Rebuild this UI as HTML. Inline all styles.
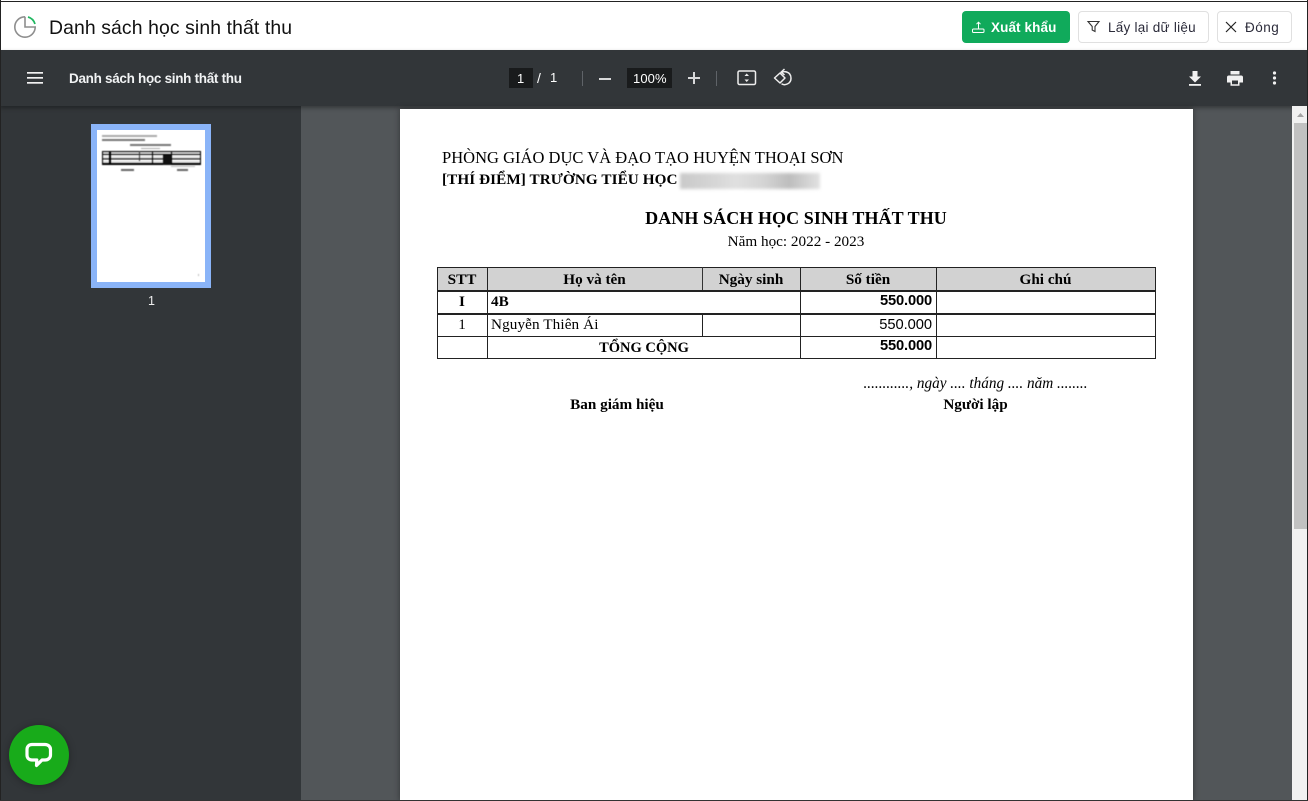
<!DOCTYPE html>
<html lang="vi"><head><meta charset="utf-8"><title>Danh sách học sinh thất thu</title>
<style>
*{box-sizing:border-box}
html,body{margin:0;padding:0;width:1308px;height:801px;overflow:hidden;background:#525659}
body{position:relative;font-family:"Liberation Sans",sans-serif}
.a{position:absolute;white-space:nowrap;line-height:1}
.r{position:absolute}
.t{font-family:"Liberation Serif",serif;color:#000}
.b{font-weight:bold}
.c{transform:translateX(-50%)}
.btn{position:absolute;top:11px;height:32px;border:1px solid #e0e0e0;border-radius:4px;background:#fff}
.w{color:#fff}
</style></head><body>
<!-- header -->
<div class="r" style="left:0;top:0;width:1308px;height:50px;background:#fff"></div>
<svg class="r" style="left:12px;top:14px" width="26" height="26" viewBox="0 0 26 26" fill="none">
<path d="M13 2.800A10.200 10.200 0 1 0 23.200 13H13V2.800" stroke="#8e8e8e" stroke-width="1.600"/>
<path d="M16 3A10.200 10.200 0 0 1 23 10" stroke="#20b760" stroke-width="1.700"/>
</svg>
<div class="a" style="left:49px;top:18.500px;font-size:19.400px;letter-spacing:.1px;color:#111">Danh sách học sinh thất thu</div>
<div class="btn" style="left:962px;width:108px;background:#10aa5b;border:0"></div>
<svg class="r" style="left:971px;top:20px" width="15" height="15" viewBox="0 0 15 15" fill="none" stroke="#fff" stroke-width="1"><path d="M7.500 2.200V9M5.500 4.200 7.500 2.200 9.500 4.200"/><rect x="1.500" y="9" width="11.500" height="3.500" rx="1"/></svg>
<div class="a b w" style="left:991px;top:21px;font-size:13.500px;letter-spacing:.1px">Xuất khẩu</div>
<div class="btn" style="left:1078px;width:131px"></div>
<svg class="r" style="left:1086px;top:19px" width="15" height="15" viewBox="0 0 15 15" fill="none" stroke="#333" stroke-width="1.100"><path d="M2 2.500H13L9 7.500V12.500L6.200 11V7.500Z"/></svg>
<div class="a" style="left:1108px;top:21px;font-size:13.500px;letter-spacing:.25px;color:#2b2b3a">Lấy lại dữ liệu</div>
<div class="btn" style="left:1217px;width:75px"></div>
<svg class="r" style="left:1224px;top:20px" width="14" height="14" viewBox="0 0 14 14" fill="none" stroke="#222" stroke-width="1.200"><path d="M2 2 12 12M12 2 2 12"/></svg>
<div class="a" style="left:1245px;top:21px;font-size:13.500px;letter-spacing:.5px;color:#2b2b3a">Đóng</div>

<!-- pdf toolbar -->
<div class="r" style="left:0;top:106px;width:301px;height:695px;background:#323639"></div>
<div class="r" style="left:0;top:50px;width:1308px;height:56px;background:#323639;box-shadow:0 2px 4px rgba(0,0,0,.35)"></div>
<svg class="r" style="left:27px;top:72px" width="16" height="12" viewBox="0 0 16 12" fill="#f1f1f1"><rect y="0" width="16" height="1.700"/><rect y="5" width="16" height="1.700"/><rect y="10" width="16" height="1.700"/></svg>
<div class="a b" style="left:69px;top:72px;font-size:13.500px;color:#f1f3f4;letter-spacing:-.3px">Danh sách học sinh thất thu</div>
<div class="r" style="left:509px;top:68px;width:24px;height:20px;background:#191b1c"></div>
<div class="a w" style="left:517px;top:72px;font-size:13px">1</div>
<div class="a w" style="left:537px;top:71px;font-size:14px">/</div>
<div class="a w" style="left:550px;top:71px;font-size:13px">1</div>
<div class="r" style="left:582px;top:71px;width:1px;height:15px;background:#5f6368"></div>
<div class="r" style="left:599px;top:78px;width:12px;height:2px;background:#d8d9da"></div>
<div class="r" style="left:627px;top:68px;width:45px;height:20px;background:#191b1c"></div>
<div class="a w" style="left:633px;top:72px;font-size:13px;letter-spacing:.1px">100%</div>
<svg class="r" style="left:688px;top:72px" width="12" height="12" fill="#d8d9da"><rect x="0" y="5" width="12" height="2"/><rect x="5" y="0" width="2" height="12"/></svg>
<div class="r" style="left:716px;top:71px;width:1px;height:15px;background:#5f6368"></div>
<svg class="r" style="left:737px;top:69px" width="20" height="18" viewBox="0 0 20 18" fill="none"><rect x="1" y="2" width="17.500" height="13.500" rx="1.500" stroke="#eee" stroke-width="1.500"/><path d="M9.700 4.500 12 7H7.500ZM9.700 13 12 10.500H7.500Z" fill="#eee"/></svg>
<svg class="r" style="left:772px;top:68px" width="22" height="20" viewBox="0 0 22 20" fill="none" stroke="#eee" stroke-width="1.500"><path d="M2.500 10 8 5 13 10 8 15Z" stroke-linejoin="round"/><path d="M8 5.500C11 2.200 19 3.200 19 10.200C19 15.700 13 18 9.500 15.800"/><path d="M12.500 1 9.300 4 12.500 7"/></svg>
<svg class="r" style="left:1187px;top:70px" width="16" height="17" viewBox="0 0 16 17" fill="#f1f1f1"><path d="M5.500 1H10.500V6.500H14L8 12.500 2 6.500H5.500Z"/><rect x="2" y="14" width="12" height="1.800"/></svg>
<svg class="r" style="left:1226px;top:70px" width="18" height="17" viewBox="0 0 18 17" fill="#f1f1f1"><path d="M4.500 1H13.500V4.500H4.500ZM2.800 5.500H15.200C16.300 5.500 17 6.200 17 7.300V12.500H13.500V15.800H4.500V12.500H1V7.300C1 6.200 1.700 5.500 2.800 5.500ZM6 10.500V14.200H12V10.500Z"/></svg>
<svg class="r" style="left:1272px;top:71px" width="5" height="14" fill="#f1f1f1"><circle cx="2.500" cy="2" r="1.600"/><circle cx="2.500" cy="7" r="1.600"/><circle cx="2.500" cy="12" r="1.600"/></svg>

<!-- thumbnail -->
<div class="r" style="left:91px;top:124px;width:120px;height:164px;background:#8ab4f8"></div>
<div class="r" style="left:97px;top:130px;width:108px;height:152px;background:#fff;overflow:hidden">
 <div style="position:absolute;left:0;top:0;width:108px;height:152px;filter:blur(.45px)">
 <div class="r" style="left:5px;top:5px;width:55px;height:1.500px;background:#aaa"></div>
 <div class="r" style="left:5px;top:9px;width:43px;height:1.500px;background:#777"></div>
 <div class="r" style="left:33px;top:14px;width:41px;height:1.500px;background:#777"></div>
 <div class="r" style="left:44px;top:18px;width:19px;height:1px;background:#aaa"></div>
 <div class="r" style="left:4.500px;top:21px;width:99px;height:14px;border:1px solid #000;background:repeating-linear-gradient(#ddd 0 2px,#000 2px 3px,#fff 3px 4.500px)"></div>
 <div class="r" style="left:12px;top:21px;width:1.500px;height:14px;background:#000"></div>
 <div class="r" style="left:42px;top:21px;width:1px;height:10px;background:#333"></div>
 <div class="r" style="left:55px;top:21px;width:1.200px;height:14px;background:#000"></div>
 <div class="r" style="left:74px;top:21px;width:1.200px;height:14px;background:#000"></div>
 <div class="r" style="left:66px;top:25px;width:8px;height:10px;background:#111"></div>
 <div class="r" style="left:24px;top:39px;width:13px;height:2px;background:#666"></div>
 <div class="r" style="left:74px;top:36px;width:24px;height:1px;background:#bbb"></div>
 <div class="r" style="left:80px;top:39px;width:11px;height:2px;background:#666"></div>
 <div class="r" style="left:101px;top:144px;width:1px;height:2px;background:#bbb"></div>
 </div>
</div>
<div class="a" style="left:148px;top:295px;font-size:12.500px;color:#eee">1</div>

<!-- page -->
<div class="r" style="left:400px;top:109px;width:793px;height:692px;background:#fff;box-shadow:0 0 6px rgba(0,0,0,.4)"></div>
<div class="a t" style="left:442px;top:149.500px;font-size:16.500px;letter-spacing:.02px">PHÒNG GIÁO DỤC VÀ ĐẠO TẠO HUYỆN THOẠI SƠN</div>
<div class="a t b" style="left:442px;top:172px;font-size:15.200px;letter-spacing:.08px">[THÍ ĐIỂM] TRƯỜNG TIỂU HỌC</div>
<div class="r" style="left:680px;top:173px;width:140px;height:16px;background:linear-gradient(90deg,#c9c9c9,#d6d6d6 25%,#e0e0e0 40%,#d4d4d4 60%,#bdbdbd 78%,#e2e2e2 100%);filter:blur(1.500px)"></div>
<div class="a t b c" style="left:796px;top:209px;font-size:18px;letter-spacing:.08px">DANH SÁCH HỌC SINH THẤT THU</div>
<div class="a t c" style="left:796px;top:233.500px;font-size:15.200px">Năm học: 2022 - 2023</div>

<!-- table -->
<div class="r" style="left:437px;top:267px;width:719px;height:23px;background:#d2d2d2"></div>
<div class="r" style="left:437px;top:267px;width:719px;height:92px;border:1px solid #222"></div>
<div class="r" style="left:437px;top:290px;width:719px;height:1.500px;background:#222"></div>
<div class="r" style="left:437px;top:313px;width:719px;height:1.500px;background:#222"></div>
<div class="r" style="left:437px;top:335.500px;width:719px;height:1.200px;background:#222"></div>
<div class="r" style="left:486.500px;top:267px;width:1.200px;height:92px;background:#222"></div>
<div class="r" style="left:702px;top:267px;width:1.200px;height:23px;background:#333"></div>
<div class="r" style="left:702px;top:313px;width:1.200px;height:23px;background:#222"></div>
<div class="r" style="left:800px;top:267px;width:1.200px;height:92px;background:#222"></div>
<div class="r" style="left:936px;top:267px;width:1.200px;height:92px;background:#222"></div>

<div class="a t b c" style="left:462px;top:271.500px;font-size:15.200px">STT</div>
<div class="a t b c" style="left:594.500px;top:271.500px;font-size:15.200px">Họ và tên</div>
<div class="a t b c" style="left:751px;top:271.500px;font-size:15.200px">Ngày sinh</div>
<div class="a t b c" style="left:868px;top:271.500px;font-size:15.200px">Số tiền</div>
<div class="a t b c" style="left:1045.500px;top:271.500px;font-size:15.200px">Ghi chú</div>
<div class="a t b c" style="left:462px;top:293.500px;font-size:15.200px">I</div>
<div class="a t b" style="left:491px;top:293.500px;font-size:15.200px">4B</div>
<div class="a b" style="right:376px;top:294px;font-size:14.700px;color:#000;letter-spacing:-.15px">550.000</div>
<div class="a t c" style="left:462px;top:316.500px;font-size:15.200px">1</div>
<div class="a t" style="left:491px;top:316.500px;font-size:15.200px;letter-spacing:.1px">Nguyễn Thiên Ái</div>
<div class="a" style="right:376px;top:318px;font-size:14.700px;color:#000;letter-spacing:-.05px">550.000</div>
<div class="a t b c" style="left:644px;top:340.500px;font-size:14.500px">TỔNG CỘNG</div>
<div class="a b" style="right:376px;top:339px;font-size:14.700px;color:#000;letter-spacing:-.15px">550.000</div>

<div class="a t c" style="left:975.500px;top:375.500px;font-size:15.250px;font-style:italic">............, ngày .... tháng .... năm ........</div>
<div class="a t b c" style="left:617px;top:396.500px;font-size:15.200px">Ban giám hiệu</div>
<div class="a t b c" style="left:975.500px;top:396.500px;font-size:15.200px">Người lập</div>

<!-- scrollbar -->
<div class="r" style="left:1292px;top:106px;width:15px;height:695px;background:#f1f1f1"></div>
<svg class="r" style="left:1292px;top:106px" width="15" height="17"><path d="M5 11 8.500 7 12 11Z" fill="#a3a3a3"/></svg>
<div class="r" style="left:1294px;top:123px;width:13px;height:406px;background:#c1c1c1"></div>

<!-- chat -->
<div class="r" style="left:9px;top:725px;width:60px;height:60px;border-radius:50%;background:#18ab1a;box-shadow:0 1px 8px rgba(0,0,0,.3)"></div>
<svg class="r" style="left:24px;top:741px" width="30" height="30" viewBox="0 0 30 30" fill="none"><path d="M8 3.500H21C24 3.500 26.500 5.500 26.500 8.500V14C26.500 17 24 19 21 19H18L12.500 24.500 12.800 19H8C5 19 3 17 3 14V8.500C3 5.500 5 3.500 8 3.500Z" stroke="#fff" stroke-width="3.200" stroke-linejoin="round"/></svg>

<!-- window frame -->
<div class="r" style="left:0;top:1px;width:1308px;height:1px;background:#222"></div>
<div class="r" style="left:0;top:0;width:1px;height:801px;background:#222"></div>
<div class="r" style="left:1307px;top:0;width:1px;height:801px;background:#222"></div>
<div class="r" style="left:0;top:800px;width:1308px;height:1px;background:#333"></div>
</body></html>
